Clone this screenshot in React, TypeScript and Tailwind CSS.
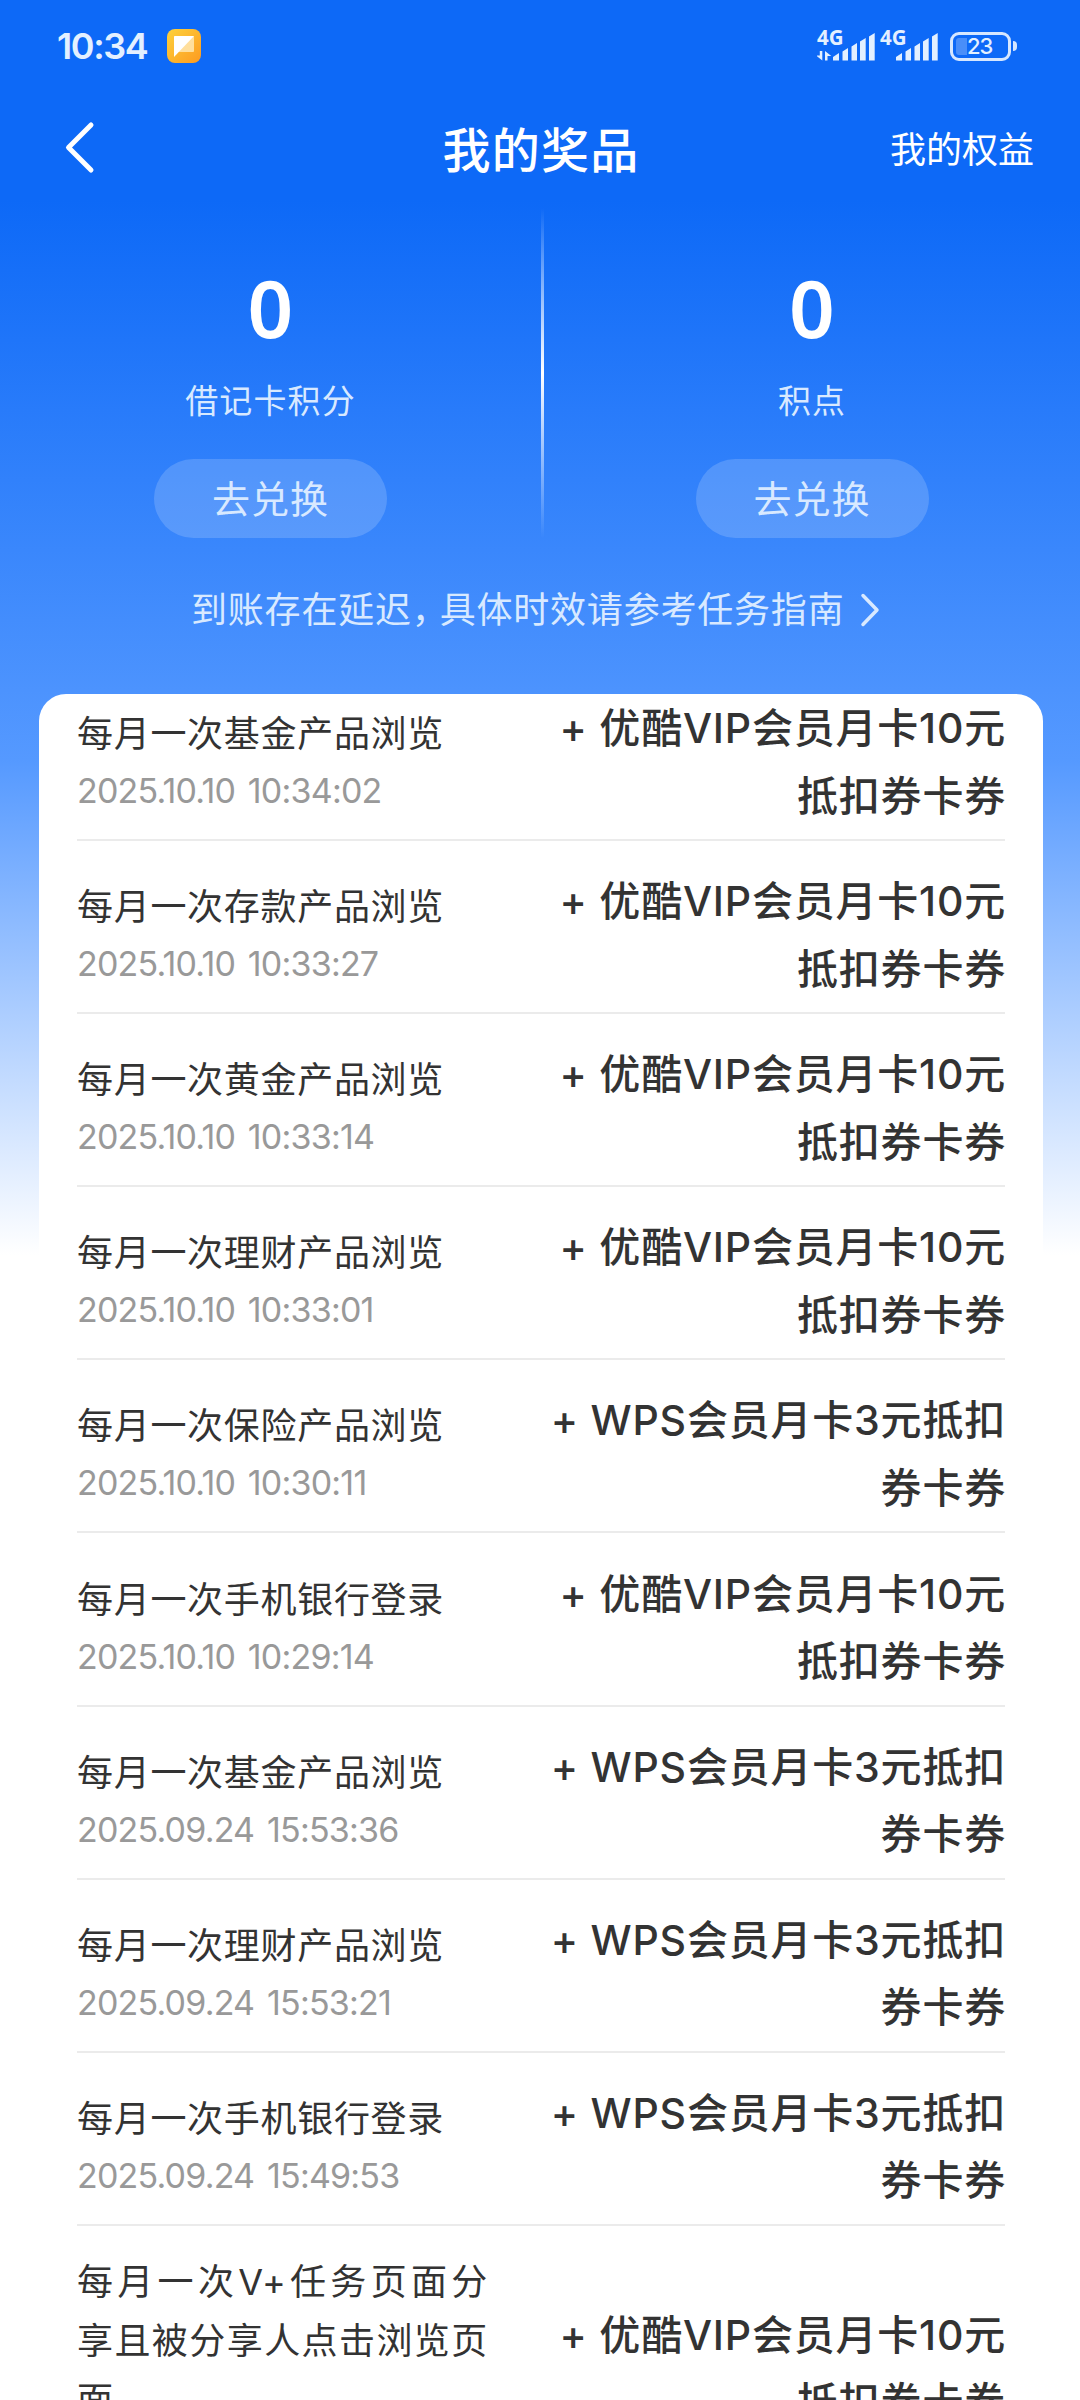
import { clsx } from 'clsx';

interface Prize {
  task: string;
  time: string;
  reward: string[];
}

const YOUKU = ['+ 优酷VIP会员月卡10元', '抵扣券卡券'];
const WPS = ['+ WPS会员月卡3元抵扣', '券卡券'];

const prizes: Prize[] = [
  { task: '每月一次基金产品浏览', time: '2025.10.10 10:34:02', reward: YOUKU },
  { task: '每月一次存款产品浏览', time: '2025.10.10 10:33:27', reward: YOUKU },
  { task: '每月一次黄金产品浏览', time: '2025.10.10 10:33:14', reward: YOUKU },
  { task: '每月一次理财产品浏览', time: '2025.10.10 10:33:01', reward: YOUKU },
  { task: '每月一次保险产品浏览', time: '2025.10.10 10:30:11', reward: WPS },
  { task: '每月一次手机银行登录', time: '2025.10.10 10:29:14', reward: YOUKU },
  { task: '每月一次基金产品浏览', time: '2025.09.24 15:53:36', reward: WPS },
  { task: '每月一次理财产品浏览', time: '2025.09.24 15:53:21', reward: WPS },
  { task: '每月一次手机银行登录', time: '2025.09.24 15:49:53', reward: WPS },
  { task: '每月一次V+任务页面分享且被分享人点击浏览页面', time: '', reward: YOUKU },
];

function Signal({ data = false }: { data?: boolean }) {
  return (
    <svg width="60" height="46" viewBox="0 -6 60 46" fill="#e3f0ff">
      <text x="0" y="16" fontSize="20.5" fontWeight="700" fontFamily="Noto Sans">4G</text>
      {data && (
        <path d="M2.8 22h2.5v9.5L-1 26.5h3.8zM8 31.5v-9.5l6.3 5h-3.8v4.500z" />
      )}
      <path d="M16 31.5v-3.5l6-4v7.5zM25.5 31.5v-9l5.5-3.5v12.5zM34.5 31.5v-14l5.5-3.5v17.5zM43 31.5v-19l5.7-3.5v22.5zM52 31.5v-24l5.7-3.5v27.5z" />
    </svg>
  );
}

function StatusBar() {
  return (
    <div className="flex h-[92px] items-center justify-between pr-[63px] pl-[57px] text-[#e3f0ff]">
      <div className="flex items-center">
        <span className="w-[110px] text-[36px] font-semibold tracking-[-1.4px] whitespace-nowrap">10:34</span>
        <svg width="34" height="34" viewBox="0 0 34 34">
          <defs>
            <linearGradient id="note" x1="0" y1="0" x2="1" y2="1">
              <stop offset="0" stopColor="#fdd23c" />
              <stop offset="1" stopColor="#fd9a20" />
            </linearGradient>
          </defs>
          <rect width="34" height="34" rx="8" fill="url(#note)" />
          <rect x="7" y="7" width="20" height="16" rx="1" fill="#ffdf9c" />
          <path d="M8 7h19L7 28V8a1 1 0 0 1 1-1z" fill="#fff" />
        </svg>
      </div>
      <div className="flex items-center">
        <Signal data />
        <div className="ml-[3px]">
          <Signal />
        </div>
        <div className="ml-[10px] flex h-[29px] w-[61px] items-center justify-end rounded-[9px] border-3 border-[#d6e7ff]">
          <div className="h-[17px] w-[11px] rounded-l-[3px] bg-white/25" />
          <span className="w-[41px] text-[22px] leading-none font-medium tracking-[-1px]">23</span>
        </div>
        <div className="ml-[2px] h-[10px] w-[4px] rounded-r-full bg-[#d6e7ff]" />
      </div>
    </div>
  );
}

function Balance({ label }: { label: string }) {
  return (
    <div className="flex flex-col items-center text-[#d8e9ff]">
      <div className="mt-[51px] h-[98px] font-['Noto_Sans'] text-[80px] leading-[96px] font-semibold text-white">0</div>
      <div className="mt-[19px] h-[50px] text-[33px] leading-[50px] tracking-[1.1px]">{label}</div>
      <button className="mt-[33px] h-[79px] w-[233px] rounded-full bg-white/17 pt-[2px] text-[38px] tracking-[1px]">
        去兑换
      </button>
    </div>
  );
}

export default function App() {
  return (
    <div className="flex h-[2400px] w-[1080px] flex-col overflow-hidden bg-[linear-gradient(180deg,#0d69f7_0px,#0d69f7_200px,#5599ff_760px,#ffffff_1255px)] font-[Inter,'Noto_Sans_CJK_SC',sans-serif]">
      <StatusBar />

      <header className="flex h-[116px] items-center justify-between pr-[46px] pl-[64px] text-white">
        <div className="w-[128px]">
          <svg className="mb-[6px]" width="32" height="54" viewBox="0 0 32 54" fill="none" stroke="#fff" strokeWidth="5" strokeLinecap="round" strokeLinejoin="round">
            <path d="M27 5L4.5 27.5l22.5 22.5" />
          </svg>
        </div>
        <h1 className="pt-[2px] text-[48px] font-medium tracking-[1.3px]">我的奖品</h1>
        <span className="w-[144px] text-[36px] whitespace-nowrap">我的权益</span>
      </header>

      <section className="grid h-[331px] grid-cols-[541px_3px_536px]">
        <Balance label="借记卡积分" />
        <div className="h-[330px] bg-[linear-gradient(180deg,transparent,#ffffff_50%,transparent)]" />
        <Balance label="积点" />
      </section>

      <div className="flex h-[155px] items-center pb-[13px] pl-[191px] text-[#d8e9ff]">
        <span className="text-[36px] tracking-[0.8px] whitespace-nowrap">
          到账存在延迟<span className="mr-[9px] [font-feature-settings:'halt']">，</span>具体时效请参考任务指南
        </span>
        <svg className="ml-[16px]" width="20" height="36" viewBox="0 0 20 36" fill="none" stroke="currentColor" strokeWidth="3.5" strokeLinecap="round" strokeLinejoin="round">
          <path d="M3 3.5l14 14.5L3 32.5" />
        </svg>
      </div>

      <main className="mr-[37px] ml-[39px] flex-1 overflow-hidden rounded-t-[27px] bg-white px-[38px] text-[#333333]">
        <ul className="-mt-[26px]">
          {prizes.map((prize, index) => (
            <li
              key={index}
              className="flex min-h-[173.1px] items-center justify-between border-b-2 border-[#ebebeb] pt-[27px] pb-[9px]"
            >
              <div className="w-[411px]">
                <p className={clsx('text-[36px] leading-[59px] tracking-[0.7px]', index === 9 && 'text-justify')}>
                  {prize.task}
                </p>
                <p className="h-[56px] text-[34px] leading-[54px] tracking-[-0.8px] [word-spacing:4px] text-[#999999]">
                  {prize.time}
                </p>
              </div>
              <div className="-mr-px text-right text-[41px] leading-[67.5px] font-medium tracking-[0.8px] whitespace-nowrap">
                {prize.reward.map(line => (
                  <p key={line}>{line}</p>
                ))}
              </div>
            </li>
          ))}
        </ul>
      </main>
    </div>
  );
}
